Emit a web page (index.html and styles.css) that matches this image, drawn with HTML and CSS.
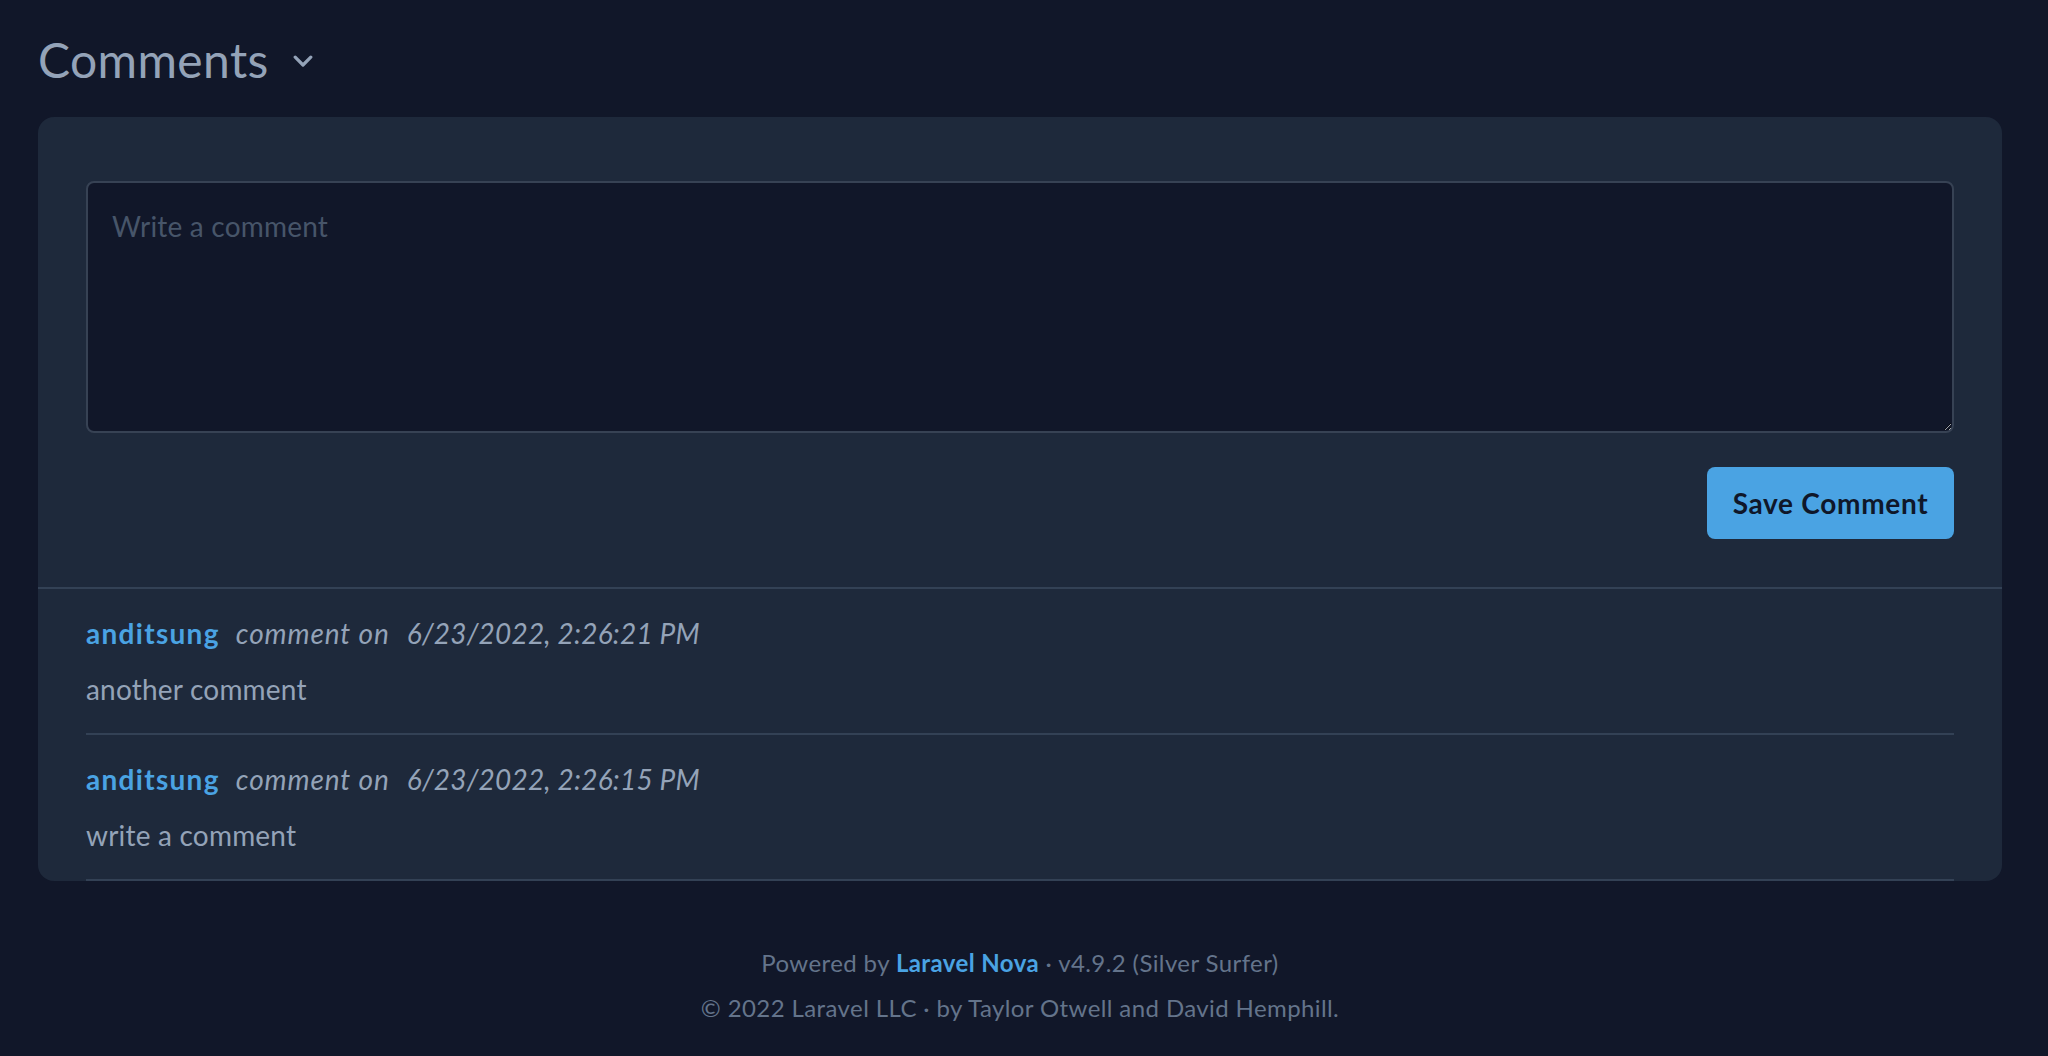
FILE: index.html
```html
<!DOCTYPE html>
<html lang="en">
<head>
<meta charset="utf-8">
<title>Comments</title>
<link rel="stylesheet" href="styles.css">
</head>
<body>
<div class="page">
  <h1 class="heading">
    <span class="heading-text">Comments</span>
    <svg class="chevron" viewBox="0 0 20 12" aria-hidden="true"><polyline points="2.2,2.2 10,10 17.8,2.2" fill="none" stroke="currentColor" stroke-width="3.2" stroke-linecap="round" stroke-linejoin="round"/></svg>
  </h1>
  <div class="card">
    <div class="form">
      <textarea class="input" placeholder="Write a comment"></textarea>
      <div class="actions">
        <button class="btn" type="button">Save Comment</button>
      </div>
    </div>
    <div class="comment">
      <div class="meta">
        <span class="author">anditsung</span>
        <span class="muted verb">comment on</span>
        <span class="muted date">6/23/2022, 2:26:21 PM</span>
      </div>
      <p class="body">another comment</p>
    </div>
    <div class="comment">
      <div class="meta">
        <span class="author">anditsung</span>
        <span class="muted verb">comment on</span>
        <span class="muted date">6/23/2022, 2:26:15 PM</span>
      </div>
      <p class="body">write a comment</p>
    </div>
  </div>
  <footer class="footer">
    <p class="footer-line">Powered by <a class="footer-link" href="#">Laravel Nova</a> · v4.9.2 (Silver Surfer)</p>
    <p class="footer-line footer-second">© 2022 Laravel LLC · by Taylor Otwell and David Hemphill.</p>
  </footer>
</div>
</body>
</html>
```

FILE: styles.css
```css
html, body {
  margin: 0;
  padding: 0;
  background: #111729;
}

body {
  font-family: "Lato", "Noto Sans", sans-serif;
  color: #94a3b8;
  min-height: 1056px;
}

.page {
  padding: 28px 46px 0 38px;
}

.heading {
  display: flex;
  align-items: center;
  margin: 0 0 25px;
  font-size: 48px;
  line-height: 64px;
  font-weight: 400;
  color: #94a3b8;
}

.heading-text {
  letter-spacing: 0.4px;
}

.chevron {
  width: 20px;
  height: 12px;
  margin-top: 2px;
  margin-left: 24px;
  color: #94a3b8;
}

.card {
  background: #1e293b;
  border-radius: 16px;
}

.form {
  padding: 64px 48px 48px;
  border-bottom: 2px solid #334155;
}

.input {
  display: block;
  box-sizing: border-box;
  width: 100%;
  height: 252px;
  margin: 0;
  padding: 23px 24px 21px;
  border: 2px solid #374254;
  border-radius: 8px;
  background: #111729;
  color: #94a3b8;
  font-family: "Lato", "Noto Sans", sans-serif;
  font-size: 28px;
  line-height: 40px;
  letter-spacing: 0.2px;
  resize: vertical;
  color-scheme: dark;
  outline: none;
}

.input::placeholder {
  color: #475569;
}

.actions {
  display: flex;
  justify-content: flex-end;
  margin-top: 34px;
}

.btn {
  width: 247px;
  height: 72px;
  padding: 0;
  border: none;
  border-radius: 8px;
  background: #4aa3e3;
  color: #0f172a;
  font-family: "Lato", "Noto Sans", sans-serif;
  font-size: 28px;
  font-weight: 700;
  letter-spacing: 0.7px;
  cursor: pointer;
}

.comment {
  margin: 0 48px;
  padding: 24px 0 24px;
  border-bottom: 2px solid #334155;
}

.meta {
  display: flex;
  align-items: baseline;
  font-size: 28px;
  line-height: 40px;
}

.author {
  font-weight: 700;
  color: #4aa3e3;
  letter-spacing: 1.3px;
  margin-right: 16px;
}

.muted {
  font-style: italic;
  color: #94a3b8;
}

.verb {
  letter-spacing: 0.9px;
  margin-right: 17px;
}

.date {
  letter-spacing: 0.2px;
}

.body {
  margin: 16px 0 0;
  font-size: 28px;
  line-height: 40px;
  letter-spacing: 0.2px;
  color: #94a3b8;
}

.footer {
  margin-top: 64px;
  text-align: center;
}

.footer-line {
  margin: 0;
  font-size: 24px;
  line-height: 36px;
  letter-spacing: 0.4px;
  color: #64748b;
}

.footer-second {
  margin-top: 9px;
}

.footer-link {
  color: #4aa3e3;
  font-weight: 700;
  text-decoration: none;
}
```
